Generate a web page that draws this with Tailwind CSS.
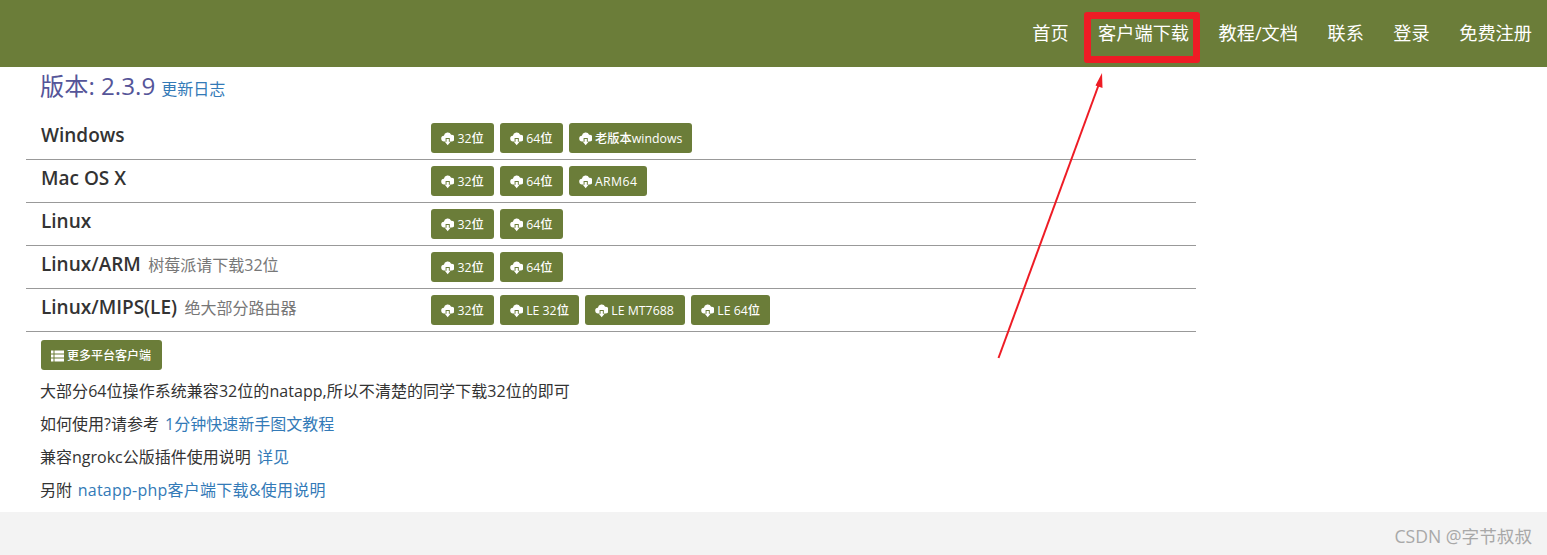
<!DOCTYPE html>
<html lang="zh-CN"><head><meta charset="utf-8">
<script src="https://cdn.jsdelivr.net/npm/@tailwindcss/browser@4"></script>
</head>
<body class="relative h-[555px] w-[1547px] overflow-hidden bg-white font-['Open_Sans','Noto_Sans_CJK_SC',sans-serif] text-[16px] text-[#333]">
<header class="flex h-[67px] items-center justify-end gap-[29.5px] bg-[#6b7d39] pr-[15px] text-[18.2px] text-white">
<a>首页</a><a>客户端下载</a><a>教程/文档</a><a>联系</a><a>登录</a><a>免费注册</a>
</header>
<main class="h-[445px] w-[1196px] pl-[26px]">
<h3 class="flex h-[44px] items-center pb-[6px] pl-[14px] text-[24.2px] leading-none text-[#555599]">版本: 2.3.9 <a class="ml-[6px] mt-[6px] text-[16px] text-[#337ab7]">更新日志</a></h3>

<div class="flex h-[49px] items-start border-b border-[#999] pl-[15px]">
<div class="w-[390px] pt-[12px] text-[19px] leading-[24px] font-semibold">Windows</div>
<div class="flex gap-[6px] pt-[12px]">
<a class="flex h-[30px] items-center gap-[3px] rounded-[3px] bg-[#6b7d39] px-[10px] pt-[2px] text-[12.3px] font-medium text-white"><svg class="h-[14px] w-[13.4px]" viewBox="0 0 14 14"><path fill="white" d="M3.5 9.500A3 3 0 0 1 3 3.500a4 4 0 0 1 7.600-1A3.500 3.500 0 0 1 11 9.500H9.200V6H4.800v3.500zM5.800 7h2.400v3H10l-3 3.500L4 10h1.800z"/></svg>32位</a>
<a class="flex h-[30px] items-center gap-[3px] rounded-[3px] bg-[#6b7d39] px-[10px] pt-[2px] text-[12.3px] font-medium text-white"><svg class="h-[14px] w-[13.4px]" viewBox="0 0 14 14"><path fill="white" d="M3.5 9.500A3 3 0 0 1 3 3.500a4 4 0 0 1 7.600-1A3.500 3.500 0 0 1 11 9.500H9.200V6H4.800v3.500zM5.800 7h2.400v3H10l-3 3.500L4 10h1.800z"/></svg>64位</a>
<a class="flex h-[30px] items-center gap-[3px] rounded-[3px] bg-[#6b7d39] px-[10px] pt-[2px] text-[12.3px] font-medium text-white"><svg class="h-[14px] w-[13.4px]" viewBox="0 0 14 14"><path fill="white" d="M3.5 9.500A3 3 0 0 1 3 3.500a4 4 0 0 1 7.600-1A3.500 3.500 0 0 1 11 9.500H9.200V6H4.800v3.500zM5.800 7h2.400v3H10l-3 3.500L4 10h1.800z"/></svg>老版本windows</a>
</div></div>

<div class="flex h-[43px] items-start border-b border-[#999] pl-[15px]">
<div class="w-[390px] pt-[6px] text-[19px] leading-[24px] font-semibold">Mac OS X</div>
<div class="flex gap-[6px] pt-[6px]">
<a class="flex h-[30px] items-center gap-[3px] rounded-[3px] bg-[#6b7d39] px-[10px] pt-[2px] text-[12.3px] font-medium text-white"><svg class="h-[14px] w-[13.4px]" viewBox="0 0 14 14"><path fill="white" d="M3.5 9.500A3 3 0 0 1 3 3.500a4 4 0 0 1 7.600-1A3.500 3.500 0 0 1 11 9.500H9.200V6H4.800v3.500zM5.800 7h2.400v3H10l-3 3.500L4 10h1.800z"/></svg>32位</a>
<a class="flex h-[30px] items-center gap-[3px] rounded-[3px] bg-[#6b7d39] px-[10px] pt-[2px] text-[12.3px] font-medium text-white"><svg class="h-[14px] w-[13.4px]" viewBox="0 0 14 14"><path fill="white" d="M3.5 9.500A3 3 0 0 1 3 3.500a4 4 0 0 1 7.600-1A3.500 3.500 0 0 1 11 9.500H9.200V6H4.800v3.500zM5.800 7h2.400v3H10l-3 3.500L4 10h1.800z"/></svg>64位</a>
<a class="flex h-[30px] items-center gap-[3px] rounded-[3px] bg-[#6b7d39] px-[10px] pt-[2px] text-[12.3px] font-medium tracking-[0.4px] text-white"><svg class="h-[14px] w-[13.4px]" viewBox="0 0 14 14"><path fill="white" d="M3.5 9.500A3 3 0 0 1 3 3.500a4 4 0 0 1 7.600-1A3.500 3.500 0 0 1 11 9.500H9.200V6H4.800v3.500zM5.800 7h2.400v3H10l-3 3.500L4 10h1.800z"/></svg>ARM64</a>
</div></div>

<div class="flex h-[43px] items-start border-b border-[#999] pl-[15px]">
<div class="w-[390px] pt-[6px] text-[19px] leading-[24px] font-semibold">Linux</div>
<div class="flex gap-[6px] pt-[6px]">
<a class="flex h-[30px] items-center gap-[3px] rounded-[3px] bg-[#6b7d39] px-[10px] pt-[2px] text-[12.3px] font-medium text-white"><svg class="h-[14px] w-[13.4px]" viewBox="0 0 14 14"><path fill="white" d="M3.5 9.500A3 3 0 0 1 3 3.500a4 4 0 0 1 7.600-1A3.500 3.500 0 0 1 11 9.500H9.200V6H4.800v3.500zM5.800 7h2.400v3H10l-3 3.500L4 10h1.800z"/></svg>32位</a>
<a class="flex h-[30px] items-center gap-[3px] rounded-[3px] bg-[#6b7d39] px-[10px] pt-[2px] text-[12.3px] font-medium text-white"><svg class="h-[14px] w-[13.4px]" viewBox="0 0 14 14"><path fill="white" d="M3.5 9.500A3 3 0 0 1 3 3.500a4 4 0 0 1 7.600-1A3.500 3.500 0 0 1 11 9.500H9.200V6H4.800v3.500zM5.800 7h2.400v3H10l-3 3.500L4 10h1.800z"/></svg>64位</a>
</div></div>

<div class="flex h-[43px] items-start border-b border-[#999] pl-[15px]">
<div class="w-[390px] pt-[6px] text-[19px] leading-[24px] font-semibold">Linux/ARM <span class="ml-[2.5px] text-[16px] font-normal text-[#777]">树莓派请下载32位</span></div>
<div class="flex gap-[6px] pt-[6px]">
<a class="flex h-[30px] items-center gap-[3px] rounded-[3px] bg-[#6b7d39] px-[10px] pt-[2px] text-[12.3px] font-medium text-white"><svg class="h-[14px] w-[13.4px]" viewBox="0 0 14 14"><path fill="white" d="M3.5 9.500A3 3 0 0 1 3 3.500a4 4 0 0 1 7.600-1A3.500 3.500 0 0 1 11 9.500H9.200V6H4.800v3.500zM5.800 7h2.400v3H10l-3 3.500L4 10h1.800z"/></svg>32位</a>
<a class="flex h-[30px] items-center gap-[3px] rounded-[3px] bg-[#6b7d39] px-[10px] pt-[2px] text-[12.3px] font-medium text-white"><svg class="h-[14px] w-[13.4px]" viewBox="0 0 14 14"><path fill="white" d="M3.5 9.500A3 3 0 0 1 3 3.500a4 4 0 0 1 7.600-1A3.500 3.500 0 0 1 11 9.500H9.200V6H4.800v3.500zM5.800 7h2.400v3H10l-3 3.500L4 10h1.800z"/></svg>64位</a>
</div></div>

<div class="flex h-[43px] items-start border-b border-[#999] pl-[15px]">
<div class="w-[390px] pt-[6px] text-[19px] leading-[24px] font-semibold">Linux/MIPS(LE) <span class="ml-[2.5px] text-[16px] font-normal text-[#777]">绝大部分路由器</span></div>
<div class="flex gap-[6px] pt-[6px]">
<a class="flex h-[30px] items-center gap-[3px] rounded-[3px] bg-[#6b7d39] px-[10px] pt-[2px] text-[12.3px] font-medium text-white"><svg class="h-[14px] w-[13.4px]" viewBox="0 0 14 14"><path fill="white" d="M3.5 9.500A3 3 0 0 1 3 3.500a4 4 0 0 1 7.600-1A3.500 3.500 0 0 1 11 9.500H9.200V6H4.800v3.500zM5.800 7h2.400v3H10l-3 3.500L4 10h1.800z"/></svg>32位</a>
<a class="flex h-[30px] items-center gap-[3px] rounded-[3px] bg-[#6b7d39] px-[10px] pt-[2px] text-[12.3px] font-medium text-white"><svg class="h-[14px] w-[13.4px]" viewBox="0 0 14 14"><path fill="white" d="M3.5 9.500A3 3 0 0 1 3 3.500a4 4 0 0 1 7.600-1A3.500 3.500 0 0 1 11 9.500H9.200V6H4.800v3.500zM5.800 7h2.400v3H10l-3 3.500L4 10h1.800z"/></svg>LE 32位</a>
<a class="flex h-[30px] w-[100px] items-center gap-[3px] rounded-[3px] bg-[#6b7d39] pl-[10px] pt-[2px] text-[12.3px] font-medium text-white"><svg class="h-[14px] w-[13.4px]" viewBox="0 0 14 14"><path fill="white" d="M3.5 9.500A3 3 0 0 1 3 3.500a4 4 0 0 1 7.600-1A3.500 3.500 0 0 1 11 9.500H9.200V6H4.800v3.500zM5.800 7h2.400v3H10l-3 3.500L4 10h1.800z"/></svg>LE MT7688</a>
<a class="flex h-[30px] items-center gap-[3px] rounded-[3px] bg-[#6b7d39] px-[10px] pt-[2px] text-[12.3px] font-medium text-white"><svg class="h-[14px] w-[13.4px]" viewBox="0 0 14 14"><path fill="white" d="M3.5 9.500A3 3 0 0 1 3 3.500a4 4 0 0 1 7.600-1A3.500 3.500 0 0 1 11 9.500H9.200V6H4.800v3.500zM5.800 7h2.400v3H10l-3 3.500L4 10h1.800z"/></svg>LE 64位</a>
</div></div>

<div class="pl-[14px]">
<a class="ml-px mt-[8px] flex h-[30px] w-[121px] items-center gap-[3px] rounded-[3px] bg-[#6b7d39] pl-[10px] pt-[1px] text-[12px] font-medium text-white"><svg class="h-[12px] w-[13px]" viewBox="0 0 13 12"><path fill="white" d="M0 .5h2.500v3H0zM3.500 .5H13v3H3.500zM0 4.500h2.500v3H0zM3.500 4.500H13v3H3.500zM0 8.500h2.500v3H0zM3.500 8.500H13v3H3.500z"/></svg>更多平台客户端</a>
<p class="mt-[5px] h-[33px] leading-[33px] tracking-[0.05px]">大部分64位操作系统兼容32位的natapp,所以不清楚的同学下载32位的即可</p>
<p class="h-[33px] leading-[33px]">如何使用?请参考 <a class="ml-[2px] text-[#337ab7]">1分钟快速新手图文教程</a></p>
<p class="h-[33px] leading-[33px]">兼容ngrokc公版插件使用说明 <a class="ml-[2px] text-[#337ab7]">详见</a></p>
<p class="h-[33px] leading-[33px]">另附 <a class="ml-[1.5px] tracking-[0.25px] text-[#337ab7]">natapp-php客户端下载&amp;使用说明</a></p>
</div>
</main>
<footer class="flex h-[43px] items-center justify-end bg-[#f3f3f3] pr-[15px] pt-[5px] text-[17.6px] text-[#a8a8a8]">CSDN @字节叔叔</footer>

<div class="absolute left-[1084px] top-[12px] h-[51px] w-[116px] rounded-[3px] border-[7px] border-[#ee1c25]"></div>
<svg class="absolute left-[990px] top-[66px]" width="120" height="300" viewBox="990 66 120 300"><line x1="998.500" y1="358" x2="1099" y2="84" stroke="#ee1c25" stroke-width="2"/><path fill="#ee1c25" d="M1102 73l.5 15-7-2.500z"/></svg>
</body></html>
